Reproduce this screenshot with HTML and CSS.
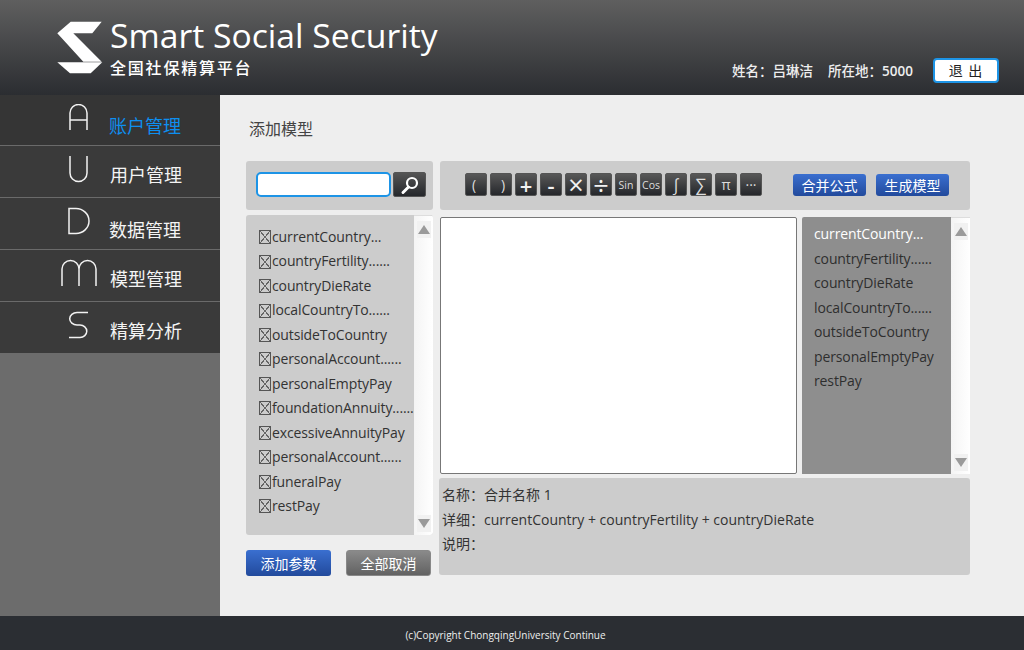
FILE: index.html
```html
<!DOCTYPE html>
<html lang="zh">
<head>
<meta charset="utf-8">
<title>Smart Social Security</title>
<link rel="stylesheet" href="styles.css">
</head>
<body>
<div class="page">
  <header class="header">
    <div class="brand">
      <svg class="logo" width="46" height="54" viewBox="0 0 46 54"><path d="M13.700 .7H44.700L35.300 12.300H16.300L44.700 40.700H26.300L.3 12.300Z" fill="#fff"/><path d="M.3 41.300H45.300L33.700 52.300H13Z" fill="#fff"/></svg>
      <div class="brand-text">
        <div class="brand-title">Smart Social Security</div>
        <div class="brand-sub">全国社保精算平台</div>
      </div>
    </div>
    <div class="user">
      <span class="user-name">姓名：吕琳洁</span>
      <span class="user-loc">所在地：<b class="user-num">5000</b></span>
      <button class="logout">退 出</button>
    </div>
  </header>
  <div class="body">
    <nav class="side">
      <a class="nav nav-a"><svg class="glyph" width="36" height="28" viewBox="0 0 36 28"><path d="M9 26V9a8.500 8.500 0 0 1 17 0V26M9 16H26" /></svg><span class="nav-label nav-active">账户管理</span></a>
      <a class="nav nav-u"><svg class="glyph" width="36" height="28" viewBox="0 0 36 28"><path d="M9 1V18a8.500 8.500 0 0 0 17 0V1" /></svg><span class="nav-label">用户管理</span></a>
      <a class="nav nav-d"><svg class="glyph" width="36" height="28" viewBox="0 0 36 28"><path d="M8 1.500V26.500H15C22 26.500 28 21 28 14S22 1.500 15 1.500Z" /></svg><span class="nav-label">数据管理</span></a>
      <a class="nav nav-m"><svg class="glyph" width="36" height="28" viewBox="0 0 36 28"><path d="M1 27V10a8.500 8.500 0 0 1 17 0V27M18 10a8.500 8.500 0 0 1 17 0V27" /></svg><span class="nav-label">模型管理</span></a>
      <a class="nav nav-s"><svg class="glyph" width="36" height="28" viewBox="0 0 36 28"><path d="M27 1.500H16a7 6 0 0 0 0 12.500H19a6.500 6 0 0 1 0 12.500H8" /></svg><span class="nav-label">精算分析</span></a>
    </nav>
    <main class="content">
      <h1 class="title">添加模型</h1>
      <div class="columns">
        <section class="left">
          <div class="panel search">
            <input class="search-input" type="text">
            <button class="search-btn"><svg width="22" height="20" viewBox="0 0 22 20"><circle cx="13" cy="8" r="5" fill="none" stroke="#fff" stroke-width="2.200"/><path d="M9.500 12L4 17.500" stroke="#fff" stroke-width="3" stroke-linecap="round"/></svg></button>
          </div>
          <div class="panel params">
            <ul class="param-list">
              <li><i class="cb"></i>currentCountry...</li>
              <li><i class="cb"></i>countryFertility......</li>
              <li><i class="cb"></i>countryDieRate</li>
              <li><i class="cb"></i>localCountryTo......</li>
              <li><i class="cb"></i>outsideToCountry</li>
              <li><i class="cb"></i>personalAccount......</li>
              <li><i class="cb"></i>personalEmptyPay</li>
              <li><i class="cb"></i>foundationAnnuity......</li>
              <li><i class="cb"></i>excessiveAnnuityPay</li>
              <li><i class="cb"></i>personalAccount......</li>
              <li><i class="cb"></i>funeralPay</li>
              <li><i class="cb"></i>restPay</li>
            </ul>
            <div class="scroll"><span class="arrow up"></span><span class="arrow down"></span></div>
          </div>
          <div class="actions">
            <button class="btn btn-blue btn-add">添加参数</button>
            <button class="btn btn-gray">全部取消</button>
          </div>
        </section>
        <section class="right">
          <div class="panel toolbar">
            <div class="ops">
              <button class="op op-l">(</button><button class="op op-r">)</button><button class="op op-big">+</button><button class="op op-big">-</button><button class="op op-big op-x">×</button><button class="op op-big op-x">÷</button><button class="op op-sm">Sin</button><button class="op op-sm">Cos</button><button class="op op-math">∫</button><button class="op op-math">∑</button><button class="op">π</button><button class="op">···</button>
            </div>
            <button class="btn btn-blue btn-tool">合并公式</button>
            <button class="btn btn-blue btn-tool">生成模型</button>
          </div>
          <div class="workspace">
            <div class="editor"></div>
            <div class="vars">
              <ul class="var-list">
                <li class="var-active">currentCountry...</li>
                <li>countryFertility......</li>
                <li>countryDieRate</li>
                <li>localCountryTo......</li>
                <li>outsideToCountry</li>
                <li>personalEmptyPay</li>
                <li>restPay</li>
              </ul>
              <div class="scroll scroll-vars"><span class="arrow up"></span><span class="arrow down"></span></div>
            </div>
          </div>
          <div class="panel info">
            <p>名称：合并名称 1</p>
            <p>详细：currentCountry + countryFertility + countryDieRate</p>
            <p>说明：</p>
          </div>
        </section>
      </div>
    </main>
  </div>
  <footer class="footer">(c)Copyright ChongqingUniversity Continue</footer>
</div>
</body>
</html>
```
FILE: styles.css
```css
* { box-sizing: border-box; }
html, body { margin: 0; padding: 0; }
body { font-family: "Open Sans", "Noto Sans CJK SC", sans-serif; color: #333; }
ul { list-style: none; margin: 0; padding: 0; }
button { font-family: inherit; padding: 0; cursor: pointer; }
.page { width: 1024px; height: 650px; display: flex; flex-direction: column; overflow: hidden; background: #eee; }

.header { height: 95px; flex: none; display: flex; justify-content: space-between; background: linear-gradient(#5f5f5f, #2b2d31); color: #fff; }
.brand { display: flex; padding: 21px 0 0 57px; }
.logo { flex: none; }
.brand-text { margin-left: 7px; margin-top: -9px; }
.brand-title { font-size: 33.700px; font-weight: 500; line-height: 46px; white-space: nowrap; font-family: "Open Sans", sans-serif; }
.brand-sub { font-size: 16px; line-height: 22px; font-weight: 500; margin-top: -1px; letter-spacing: 1.800px; }
.user { display: flex; align-items: flex-start; padding: 58px 25px 0 0; font-size: 13.500px; font-weight: 500; color: #eee; line-height: 26px; }
.user-name { margin-right: 15px; }
.user-loc { margin-right: 20px; }
.user-num { font-weight: 600; }
.logout { width: 66px; height: 25px; background: #fff; border: 2px solid #1d94e6; border-radius: 4px; font-size: 14px; color: #222; line-height: 20px; letter-spacing: 1px; }

.body { flex: 1; display: flex; min-height: 0; }
.side { width: 220px; flex: none; background: #6c6c6c; }
.nav { height: 52px; background: #3a3a3a; border-bottom: 1px solid #6a6a6a; display: flex; }
.nav-a { height: 51px; background: #353535; }
.nav-s { height: 51px; border-bottom: 0; }
.glyph { flex: none; margin-left: 61px; margin-top: 9px; fill: none; stroke: #f2f2f2; stroke-width: 1.500; }
.nav-label { font-size: 18px; line-height: 26px; color: #f4f4f4; margin-left: 13px; white-space: nowrap; font-family: "Noto Sans CJK SC", sans-serif; font-weight: 400; }
.nav-active { color: #0d8ff0; margin-left: 12px; margin-top: 17px; }
.nav-u .nav-label { margin-top: 15px; }
.nav-d .nav-label { margin-left: 12px; margin-top: 18px; }
.nav-m .nav-label { margin-top: 15px; }
.nav-s .nav-label { margin-top: 15px; }

.content { flex: 1; padding: 0 54px 0 26px; min-width: 0; }
.title { margin: 22px 0 0 3px; font-size: 16px; line-height: 24px; font-weight: 400; color: #444; }
.columns { display: flex; gap: 7px; margin-top: 20px; }
.left { width: 187px; flex: none; display: flex; flex-direction: column; }
.right { width: 530px; flex: none; display: flex; flex-direction: column; }
.panel { background: #cccccc; border-radius: 3px; }

.search { height: 49px; display: flex; align-items: center; padding: 0 7px 2px 10px; gap: 2px; }
.search-input { width: 135px; height: 25px; border: 2px solid #1d94e6; border-radius: 5px; background: #fff; padding: 0; }
.search-btn { width: 33px; height: 25px; border: 1px solid #555; border-radius: 2px; background: linear-gradient(#555, #25272b); display: flex; align-items: center; justify-content: center; }

.params { height: 320px; margin-top: 5px; display: flex; justify-content: space-between; overflow: hidden; }
.param-list { padding: 10px 0 0 13px; font-size: 14px; letter-spacing: -0.120px; line-height: 24.450px; color: #333; white-space: nowrap; width: 168px; }
.param-list li { display: flex; align-items: center; }
.cb { flex: none; width: 12px; height: 14px; margin-right: 1px; border: 1px solid #555; background:
  linear-gradient(to top right, transparent 47%, #666 47%, #666 53%, transparent 53%),
  linear-gradient(to bottom right, transparent 47%, #666 47%, #666 53%, transparent 53%); }
.scroll { width: 19px; flex: none; background: linear-gradient(90deg, #f4f4f4, #fff); display: flex; flex-direction: column; justify-content: space-between; align-items: center; padding: 5px 0 3px; border-top: 1px solid #ddd; }
.arrow { width: 14px; height: 17px; display: block; position: relative; background: #f1f1f1; }
.arrow::after { content: ""; position: absolute; left: 1px; width: 0; height: 0; border-left: 6px solid transparent; border-right: 6px solid transparent; }
.up::after { top: 4px; border-bottom: 9px solid #9a9a9a; }
.down::after { top: 4px; border-top: 9px solid #9a9a9a; }

.actions { display: flex; justify-content: space-between; margin-top: 15px; padding-right: 2px; }
.btn { border: 0; border-radius: 3px; color: #fff; white-space: nowrap; font-family: "Noto Sans CJK SC", sans-serif; }
.btn-blue { background: linear-gradient(#3a6fd0, #224a9c); }
.btn-gray { background: linear-gradient(#8a8a8a, #626262); width: 85px; height: 26px; font-size: 14px; border: 1px solid #888; }
.btn-add { width: 85px; height: 26px; font-size: 14px; }

.toolbar { height: 49px; display: flex; align-items: center; padding: 0 0 2px 25px; }
.ops { display: flex; gap: 3px; margin-right: 31px; }
.op { width: 22px; height: 23px; border: 1px solid #555; border-radius: 2px; background: linear-gradient(#585858, #25272b); color: #ddd; font-size: 14px; line-height: 20px; font-family: "Open Sans", sans-serif; }
.op-l { padding-right: 4px; }
.op-r { padding-left: 4px; }
.op-big { font-size: 22px; font-weight: 600; color: #f2f2f2; }
.op-x { font-size: 27px; font-weight: 400; }
.op-sm { font-size: 10.500px; }
.op-math { font-size: 17px; }
.btn-tool { width: 73px; height: 22px; font-size: 14px; line-height: 20px; margin-right: 10px; }

.workspace { display: flex; height: 257px; margin-top: 7px; gap: 5px; }
.editor { width: 357px; flex: none; background: #fff; border: 1px solid #777; border-radius: 2px; }
.vars { flex: 1; display: flex; background: #8e8e8e; border-radius: 2px 0 0 0; }
.var-list { flex: 1; padding: 5px 0 0 12px; font-size: 14px; letter-spacing: -0.120px; line-height: 24.500px; color: #2e2e2e; white-space: nowrap; }
.var-active { color: #fff; }
.scroll-vars { background: linear-gradient(90deg, #f4f4f4, #fff); }

.info { height: 97px; margin: 4px 0 0 -1px; padding: 5px 0 0 3px; font-size: 14px; line-height: 24.500px; color: #333; }
.info p { margin: 0; }

.footer { height: 34px; flex: none; background: #2b2e33; color: #eee; font-size: 10px; line-height: 38px; text-align: center; padding-right: 13px; }
```
